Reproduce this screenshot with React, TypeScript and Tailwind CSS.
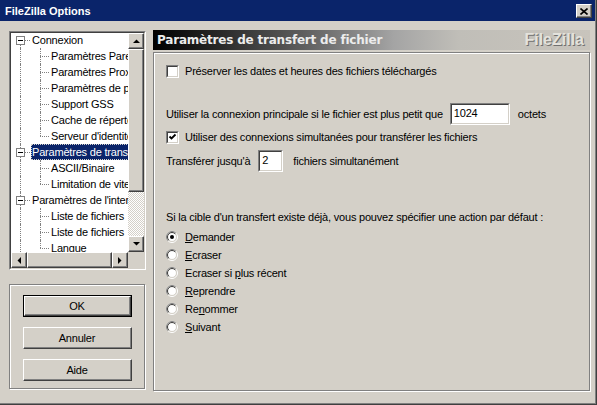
import React from "react"

const raised =
  "bg-[#d4d0c8] border border-t-white border-l-white border-r-[#404040] border-b-[#404040] shadow-[inset_-1px_-1px_0_#808080,inset_1px_1px_0_#d4d0c8]"
const sunkenOuter = "border border-t-[#808080] border-l-[#808080] border-r-white border-b-white"
const sunkenInner = "border border-t-[#404040] border-l-[#404040] border-r-[#d4d0c8] border-b-[#d4d0c8]"
const etched = "border border-[#808080] shadow-[inset_1px_1px_0_#ffffff,1px_1px_0_#ffffff]"
const checker =
  "bg-[repeating-conic-gradient(#ffffff_0%_25%,#d4d0c8_0%_50%)] bg-[length:2px_2px]"

type Node = { l: number; t: string; sel?: boolean; last?: boolean; first?: boolean }

const tree: Node[] = [
  { l: 0, t: "Connexion", first: true },
  { l: 1, t: "Paramètres Pare-feu" },
  { l: 1, t: "Paramètres Proxy" },
  { l: 1, t: "Paramètres de proxy générique" },
  { l: 1, t: "Support GSS" },
  { l: 1, t: "Cache de répertoire" },
  { l: 1, t: "Serveur d'identité", last: true },
  { l: 0, t: "Paramètres de transfert de fichier", sel: true },
  { l: 1, t: "ASCII/Binaire" },
  { l: 1, t: "Limitation de vitesse", last: true },
  { l: 0, t: "Paramètres de l'interface" },
  { l: 1, t: "Liste de fichiers  locaux" },
  { l: 1, t: "Liste de fichiers  distants" },
  { l: 1, t: "Langue", last: true },
]

function Arrow({ dir }: { dir: "up" | "down" | "left" | "right" }) {
  const pts = {
    up: "0,4 7,4 3.5,0.5",
    down: "0,0 7,0 3.5,3.5",
    left: "4,0 4,7 0.5,3.5",
    right: "0,0 0,7 3.5,3.5",
  }[dir]
  const vertical = dir === "up" || dir === "down"
  return (
    <div className={`${raised} w-[16px] h-[16px] flex items-center justify-center shrink-0`}>
      <svg width={vertical ? 7 : 4} height={vertical ? 4 : 7} viewBox={vertical ? "0 0 7 4" : "0 0 4 7"}>
        <polygon points={pts} fill="#000" />
      </svg>
    </div>
  )
}

function TreeRow({ n }: { n: Node }) {
  const dot = "border-[#808080] border-dotted"
  return (
    <div className="relative h-[16px] whitespace-pre">
      {/* root line */}
      <div className={`absolute left-[9px] ${n.first ? "top-[8px]" : "top-0"} bottom-0 border-l ${dot}`} />
      {n.l === 0 ? (
        <>
          <div className={`absolute left-[14px] top-[8px] w-[5px] border-t ${dot}`} />
          <div className="absolute left-[5px] top-[4px] w-[9px] h-[9px] border border-[#808080] bg-white flex items-center justify-center">
            <div className="w-[5px] h-[1px] bg-black" />
          </div>
          <span
            className={`absolute left-[20px] top-0 h-[16px] leading-[16px] px-[1px] ${
              n.sel ? "bg-[#0a246a] text-white outline outline-1 outline-dotted outline-[#d4d0c8] -outline-offset-1" : ""
            }`}
          >
            {n.t}
          </span>
        </>
      ) : (
        <>
          <div className={`absolute left-[29px] top-0 ${n.last ? "h-[8px]" : "bottom-0"} border-l ${dot}`} />
          <div className={`absolute left-[29px] top-[8px] w-[9px] border-t ${dot}`} />
          <span className="absolute left-[39px] top-0 h-[16px] leading-[16px] px-[1px]">{n.t}</span>
        </>
      )}
    </div>
  )
}

function Check({ checked, label }: { checked?: boolean; label: string }) {
  return (
    <div className="flex items-center h-[13px]">
      <div className={`${sunkenOuter} w-[13px] h-[13px] shrink-0`}>
        <div className={`${sunkenInner} w-full h-full bg-white`}>
          {checked && (
            <svg width="9" height="9" viewBox="0 0 9 9" className="block">
              <polyline points="1.5,3.5 3.5,5.5 7.5,1.5" fill="none" stroke="#000" strokeWidth="1.8" />
            </svg>
          )}
        </div>
      </div>
      <span className="ml-[6px]">{label}</span>
    </div>
  )
}

function Radio({ checked, children }: { checked?: boolean; children: React.ReactNode }) {
  return (
    <div className="flex items-center h-[18px]">
      <svg width="12" height="12" viewBox="0 0 12 12" className="shrink-0">
        <circle cx="6" cy="6" r="5.5" fill="none" stroke="#ffffff" />
        <path d="M2.1 9.9 A5.5 5.5 0 0 1 9.9 2.1" fill="none" stroke="#808080" />
        <circle cx="6" cy="6" r="4.5" fill="#ffffff" stroke="#d4d0c8" />
        <path d="M2.8 9.2 A4.5 4.5 0 0 1 9.2 2.8" fill="none" stroke="#404040" />
        {checked && <circle cx="6" cy="6" r="2" fill="#000" />}
      </svg>
      <span className="ml-[7px]">{children}</span>
    </div>
  )
}

function Edit({ value, w }: { value: string; w: string }) {
  return (
    <div className={`${sunkenOuter} ${w} h-[22px] shrink-0`}>
      <div className={`${sunkenInner} w-full h-full bg-white pl-[2px] pt-[1px] leading-[14px]`}>{value}</div>
    </div>
  )
}

function Button({ label, def }: { label: string; def?: boolean }) {
  const inner = (
    <div className={`${raised} w-full h-full flex items-center justify-center`}>{label}</div>
  )
  return def ? (
    <div className="w-[109px] h-[22px] border border-black">{inner}</div>
  ) : (
    <div className="w-[109px] h-[22px]">{inner}</div>
  )
}

export default function App() {
  return (
    <div className="w-[597px] h-[405px] bg-[#d4d0c8] border-r border-b border-[#404040] overflow-hidden font-['Liberation_Sans',Arial,sans-serif] text-[11px] tracking-[-0.2px] text-black">
      <div className="h-full border-r border-b border-[#808080] flex flex-col">
        {/* Title bar */}
        <div className="h-[21px] bg-[#0a246a] flex items-center justify-between pl-[5px] pr-[3px] shrink-0">
          <span className="text-white font-bold text-[11px] tracking-normal pt-[2px]">FileZilla Options</span>
          <div className={`${raised} w-[16px] h-[14px] flex items-center justify-center mt-[1px]`}>
            <svg width="8" height="7" viewBox="0 0 8 7">
              <path d="M0.5 0.5 L7.5 6.5 M7.5 0.5 L0.5 6.5" stroke="#000" strokeWidth="1.6" />
            </svg>
          </div>
        </div>

        <div className="flex pl-[9px] pt-[9px]">
          {/* Left column */}
          <div className="w-[137px] mt-[1px] flex flex-col">
            <div className={`${sunkenOuter} h-[239px]`}>
              <div className={`${sunkenInner} h-full flex flex-col`}>
                <div className="flex flex-1 min-h-0">
                  <div className="flex-1 bg-white overflow-hidden">
                    <div className="-mt-[1px]">
                      {tree.map((n, i) => (
                        <TreeRow key={i} n={n} />
                      ))}
                    </div>
                  </div>
                  <div className="w-[16px] flex flex-col">
                    <Arrow dir="up" />
                    <div className={`${raised} h-[143px] w-[16px]`} />
                    <div className={`flex-1 ${checker}`} />
                    <Arrow dir="down" />
                  </div>
                </div>
                <div className="h-[16px] flex">
                  <Arrow dir="left" />
                  <div className={`${raised} h-[16px] flex-1`} />
                  <Arrow dir="right" />
                  <div className="w-[16px] h-[16px] bg-[#d4d0c8]" />
                </div>
              </div>
            </div>

            <div className={`${etched} mt-[14px] w-[136px] h-[105px] flex flex-col items-center pt-[10px] gap-[10px]`}>
              <Button label="OK" def />
              <Button label="Annuler" />
              <Button label="Aide" />
            </div>
          </div>

          {/* Right panel */}
          <div className="ml-[7px] w-[437px] flex flex-col">
            <div className="h-[20px] bg-[linear-gradient(to_right,#000000_0%,#282828_15%,#606060_35%,#a4a4a4_55%,#c0beb8_70%,#c8c4bc_100%)] flex items-center justify-between pl-[4px] pr-[6px]">
              <span className="font-['DejaVu_Sans',Verdana,sans-serif] font-bold text-[12px] tracking-[-0.2px] text-[#ececec]">
                Paramètres de transfert de fichier
              </span>
              <span className="font-['Liberation_Sans',Arial,sans-serif] font-bold text-[16px] tracking-normal text-[#e4e2dc] [text-shadow:1px_1px_0_#707070]">
                FileZilla
              </span>
            </div>
            <div className={`${etched} mt-[2px] h-[339px] w-[437px] pl-[12px] pt-[12px] flex flex-col`}>
              <Check label="Préserver les dates et heures des fichiers téléchargés" />

              <div className="mt-[25px] flex items-center h-[22px]">
                <span>Utiliser la connexion principale si le fichier est plus petit que</span>
                <div className="ml-[7px]">
                  <Edit value="1024" w="w-[60px]" />
                </div>
                <span className="ml-[8px]">octets</span>
              </div>

              <div className="mt-[6px]">
                <Check checked label="Utiliser des connexions simultanées pour transférer les fichiers" />
              </div>

              <div className="mt-[6px] flex items-center h-[22px]">
                <span>Transférer jusqu'à</span>
                <div className="ml-[8px]">
                  <Edit value="2" w="w-[25px]" />
                </div>
                <span className="ml-[10px]">fichiers simultanément</span>
              </div>

              <div className="mt-[39px] leading-[13px]">
                Si la cible d'un transfert existe déjà, vous pouvez spécifier une action par défaut :
              </div>

              <div className="mt-[4px] flex flex-col">
                <Radio checked>
                  <u>D</u>emander
                </Radio>
                <Radio>
                  <u>E</u>craser
                </Radio>
                <Radio>
                  Ecraser si <u>p</u>lus récent
                </Radio>
                <Radio>
                  <u>R</u>eprendre
                </Radio>
                <Radio>
                  Re<u>n</u>ommer
                </Radio>
                <Radio>
                  <u>S</u>uivant
                </Radio>
              </div>
            </div>
          </div>
        </div>
      </div>
    </div>
  )
}
